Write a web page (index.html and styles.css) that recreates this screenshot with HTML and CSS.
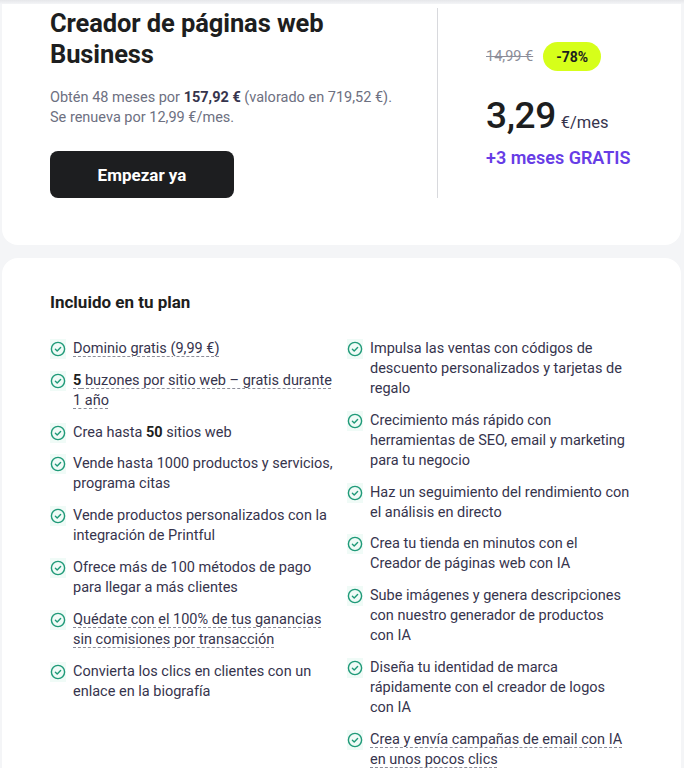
FILE: index.html
```html
<!DOCTYPE html>
<html lang="es">
<head>
<meta charset="utf-8">
<title>Creador de páginas web Business</title>
<link rel="stylesheet" href="styles.css">
</head>
<body>
<div class="page">
  <section class="card plan">
    <div class="plan-main">
      <h1 class="plan-title">Creador de páginas web Business</h1>
      <p class="plan-desc">
        <span class="line">Obtén 48 meses por <strong>157,92 €</strong> (valorado en 719,52 €).</span>
        <span class="line">Se renueva por 12,99 €/mes.</span>
      </p>
      <button class="btn-start">Empezar ya</button>
    </div>
    <div class="plan-price">
      <div class="price-old-row">
        <span class="price-old">14,99 €</span>
        <span class="badge">-78%</span>
      </div>
      <div class="price-now"><span class="amount">3,29</span><span class="unit">€/mes</span></div>
      <div class="price-bonus">+3 meses GRATIS</div>
    </div>
  </section>

  <section class="card features">
    <h2 class="features-title">Incluido en tu plan</h2>
    <div class="features-grid">
      <ul class="feature-list">
        <li class="feature"><span class="ico"><svg viewBox="0 0 16 16" width="16" height="16"><circle cx="8" cy="8" r="6.6" fill="none" stroke="#1f9a78" stroke-width="1.4"/><path d="M5.4 8.2 L7.2 9.9 L10.6 6.4" fill="none" stroke="#1f9a78" stroke-width="1.4" stroke-linecap="round" stroke-linejoin="round"/></svg></span><span class="txt"><span class="dash">Dominio gratis (9,99 €)</span></span></li>
        <li class="feature"><span class="ico"><svg viewBox="0 0 16 16" width="16" height="16"><circle cx="8" cy="8" r="6.6" fill="none" stroke="#1f9a78" stroke-width="1.4"/><path d="M5.4 8.2 L7.2 9.9 L10.6 6.4" fill="none" stroke="#1f9a78" stroke-width="1.4" stroke-linecap="round" stroke-linejoin="round"/></svg></span><span class="txt"><span class="dash"><strong>5</strong> buzones por sitio web – gratis durante 1 año</span></span></li>
        <li class="feature"><span class="ico"><svg viewBox="0 0 16 16" width="16" height="16"><circle cx="8" cy="8" r="6.6" fill="none" stroke="#1f9a78" stroke-width="1.4"/><path d="M5.4 8.2 L7.2 9.9 L10.6 6.4" fill="none" stroke="#1f9a78" stroke-width="1.4" stroke-linecap="round" stroke-linejoin="round"/></svg></span><span class="txt">Crea hasta <strong>50</strong> sitios web</span></li>
        <li class="feature"><span class="ico"><svg viewBox="0 0 16 16" width="16" height="16"><circle cx="8" cy="8" r="6.6" fill="none" stroke="#1f9a78" stroke-width="1.4"/><path d="M5.4 8.2 L7.2 9.9 L10.6 6.4" fill="none" stroke="#1f9a78" stroke-width="1.4" stroke-linecap="round" stroke-linejoin="round"/></svg></span><span class="txt">Vende hasta 1000 productos y servicios, programa citas</span></li>
        <li class="feature"><span class="ico"><svg viewBox="0 0 16 16" width="16" height="16"><circle cx="8" cy="8" r="6.6" fill="none" stroke="#1f9a78" stroke-width="1.4"/><path d="M5.4 8.2 L7.2 9.9 L10.6 6.4" fill="none" stroke="#1f9a78" stroke-width="1.4" stroke-linecap="round" stroke-linejoin="round"/></svg></span><span class="txt">Vende productos personalizados con la integración de Printful</span></li>
        <li class="feature"><span class="ico"><svg viewBox="0 0 16 16" width="16" height="16"><circle cx="8" cy="8" r="6.6" fill="none" stroke="#1f9a78" stroke-width="1.4"/><path d="M5.4 8.2 L7.2 9.9 L10.6 6.4" fill="none" stroke="#1f9a78" stroke-width="1.4" stroke-linecap="round" stroke-linejoin="round"/></svg></span><span class="txt">Ofrece más de 100 métodos de pago para llegar a más clientes</span></li>
        <li class="feature"><span class="ico"><svg viewBox="0 0 16 16" width="16" height="16"><circle cx="8" cy="8" r="6.6" fill="none" stroke="#1f9a78" stroke-width="1.4"/><path d="M5.4 8.2 L7.2 9.9 L10.6 6.4" fill="none" stroke="#1f9a78" stroke-width="1.4" stroke-linecap="round" stroke-linejoin="round"/></svg></span><span class="txt"><span class="dash">Quédate con el 100% de tus ganancias sin comisiones por transacción</span></span></li>
        <li class="feature"><span class="ico"><svg viewBox="0 0 16 16" width="16" height="16"><circle cx="8" cy="8" r="6.6" fill="none" stroke="#1f9a78" stroke-width="1.4"/><path d="M5.4 8.2 L7.2 9.9 L10.6 6.4" fill="none" stroke="#1f9a78" stroke-width="1.4" stroke-linecap="round" stroke-linejoin="round"/></svg></span><span class="txt">Convierta los clics en clientes con un enlace en la biografía</span></li>
      </ul>
      <ul class="feature-list">
        <li class="feature"><span class="ico"><svg viewBox="0 0 16 16" width="16" height="16"><circle cx="8" cy="8" r="6.6" fill="none" stroke="#1f9a78" stroke-width="1.4"/><path d="M5.4 8.2 L7.2 9.9 L10.6 6.4" fill="none" stroke="#1f9a78" stroke-width="1.4" stroke-linecap="round" stroke-linejoin="round"/></svg></span><span class="txt">Impulsa las ventas con códigos de descuento personalizados y tarjetas de regalo</span></li>
        <li class="feature"><span class="ico"><svg viewBox="0 0 16 16" width="16" height="16"><circle cx="8" cy="8" r="6.6" fill="none" stroke="#1f9a78" stroke-width="1.4"/><path d="M5.4 8.2 L7.2 9.9 L10.6 6.4" fill="none" stroke="#1f9a78" stroke-width="1.4" stroke-linecap="round" stroke-linejoin="round"/></svg></span><span class="txt">Crecimiento más rápido con herramientas de SEO, email y marketing para tu negocio</span></li>
        <li class="feature"><span class="ico"><svg viewBox="0 0 16 16" width="16" height="16"><circle cx="8" cy="8" r="6.6" fill="none" stroke="#1f9a78" stroke-width="1.4"/><path d="M5.4 8.2 L7.2 9.9 L10.6 6.4" fill="none" stroke="#1f9a78" stroke-width="1.4" stroke-linecap="round" stroke-linejoin="round"/></svg></span><span class="txt">Haz un seguimiento del rendimiento con el análisis en directo</span></li>
        <li class="feature"><span class="ico"><svg viewBox="0 0 16 16" width="16" height="16"><circle cx="8" cy="8" r="6.6" fill="none" stroke="#1f9a78" stroke-width="1.4"/><path d="M5.4 8.2 L7.2 9.9 L10.6 6.4" fill="none" stroke="#1f9a78" stroke-width="1.4" stroke-linecap="round" stroke-linejoin="round"/></svg></span><span class="txt">Crea tu tienda en minutos con el<br>Creador de páginas web con IA</span></li>
        <li class="feature"><span class="ico"><svg viewBox="0 0 16 16" width="16" height="16"><circle cx="8" cy="8" r="6.6" fill="none" stroke="#1f9a78" stroke-width="1.4"/><path d="M5.4 8.2 L7.2 9.9 L10.6 6.4" fill="none" stroke="#1f9a78" stroke-width="1.4" stroke-linecap="round" stroke-linejoin="round"/></svg></span><span class="txt">Sube imágenes y genera descripciones con nuestro generador de productos<br>con IA</span></li>
        <li class="feature"><span class="ico"><svg viewBox="0 0 16 16" width="16" height="16"><circle cx="8" cy="8" r="6.6" fill="none" stroke="#1f9a78" stroke-width="1.4"/><path d="M5.4 8.2 L7.2 9.9 L10.6 6.4" fill="none" stroke="#1f9a78" stroke-width="1.4" stroke-linecap="round" stroke-linejoin="round"/></svg></span><span class="txt">Diseña tu identidad de marca rápidamente con el creador de logos<br>con IA</span></li>
        <li class="feature"><span class="ico"><svg viewBox="0 0 16 16" width="16" height="16"><circle cx="8" cy="8" r="6.6" fill="none" stroke="#1f9a78" stroke-width="1.4"/><path d="M5.4 8.2 L7.2 9.9 L10.6 6.4" fill="none" stroke="#1f9a78" stroke-width="1.4" stroke-linecap="round" stroke-linejoin="round"/></svg></span><span class="txt"><span class="dash">Crea y envía campañas de email con IA en unos pocos clics</span></span></li>
      </ul>
    </div>
  </section>
</div>
</body>
</html>
```

FILE: styles.css
```css
* { box-sizing: border-box; }
html, body { margin: 0; padding: 0; }
body {
  background: #f4f5f7;
  font-family: Roboto, "Liberation Sans", Arial, sans-serif;
  color: #36344d;
  height: 768px;
  overflow: hidden;
}
.page {
  padding: 4px 3px 0 2px;
  background: linear-gradient(#e6e7ea 0, #f4f5f7 4px, #f4f5f7 100%);
}
.card {
  background: #ffffff;
}
.plan {
  display: flex;
  padding: 4px 48px 47px 48px;
  border-radius: 0 0 16px 16px;
}
.plan-main {
  width: 388px;
  border-right: 1px solid #d8d9dd;
}
.plan-title {
  margin: 0;
  max-width: 300px;
  font-size: 25.5px;
  line-height: 31px;
  font-weight: 700;
  color: #1d1e20;
  letter-spacing: -0.1px;
}
.plan-desc {
  margin: 18px 0 0;
  font-size: 14.5px;
  line-height: 20px;
  color: #6d7081;
}
.plan-desc .line { display: block; }
.plan-desc strong { color: #36344d; font-weight: 700; }
.btn-start {
  margin-top: 23px;
  width: 184px;
  height: 47px;
  border: 0;
  border-radius: 8px;
  background: #1d1e20;
  color: #ffffff;
  font-family: inherit;
  font-size: 17px;
  font-weight: 700;
  display: block;
}
.plan-price {
  padding: 34px 0 0 48px;
}
.price-old-row {
  display: flex;
  align-items: center;
  gap: 10px;
  height: 29px;
}
.price-old {
  font-size: 14.5px;
  color: #8c8d99;
  text-decoration: line-through;
}
.badge {
  display: inline-flex;
  align-items: center;
  justify-content: center;
  width: 58px;
  height: 29px;
  border-radius: 15px;
  background: #d6ff1a;
  color: #1d1e20;
  font-size: 14px;
  font-weight: 700;
}
.price-now {
  margin-top: 23px;
  line-height: 44px;
  display: flex;
  align-items: baseline;
  gap: 5px;
  color: #1d1e20;
}
.amount {
  font-size: 37px;
  font-weight: 500;
  letter-spacing: -0.4px;
}
.unit {
  font-size: 16.5px;
  color: #36344d;
}
.price-bonus {
  margin-top: 1px;
  font-size: 18px;
  line-height: 24px;
  font-weight: 600;
  color: #673de6;
}
.features {
  margin-top: 13px;
  border-radius: 16px 16px 0 0;
  padding: 32px 48px 0 48px;
  height: 510px;
}
.features-title {
  margin: 0;
  font-size: 17px;
  line-height: 24px;
  font-weight: 700;
  color: #1d1e20;
}
.features-grid {
  margin-top: 25px;
  display: grid;
  grid-template-columns: 288px 288px;
  column-gap: 9px;
}
.feature-list {
  list-style: none;
  margin: 0;
  padding: 0;
  display: flex;
  flex-direction: column;
  gap: 11.8px;
}
.feature {
  display: flex;
  align-items: flex-start;
  gap: 7px;
  font-size: 14.5px;
  line-height: 20px;
  color: #36344d;
}
.ico {
  flex: 0 0 16px;
  height: 20px;
  display: flex;
  align-items: center;
  background: #f0fbf7;
}
.ico svg { display: block; }
.txt strong { font-weight: 700; color: #1d1e20; }
.dash {
  text-decoration: underline dashed #8c8d99;
  text-decoration-thickness: 1px;
  text-underline-offset: 3px;
}
```
